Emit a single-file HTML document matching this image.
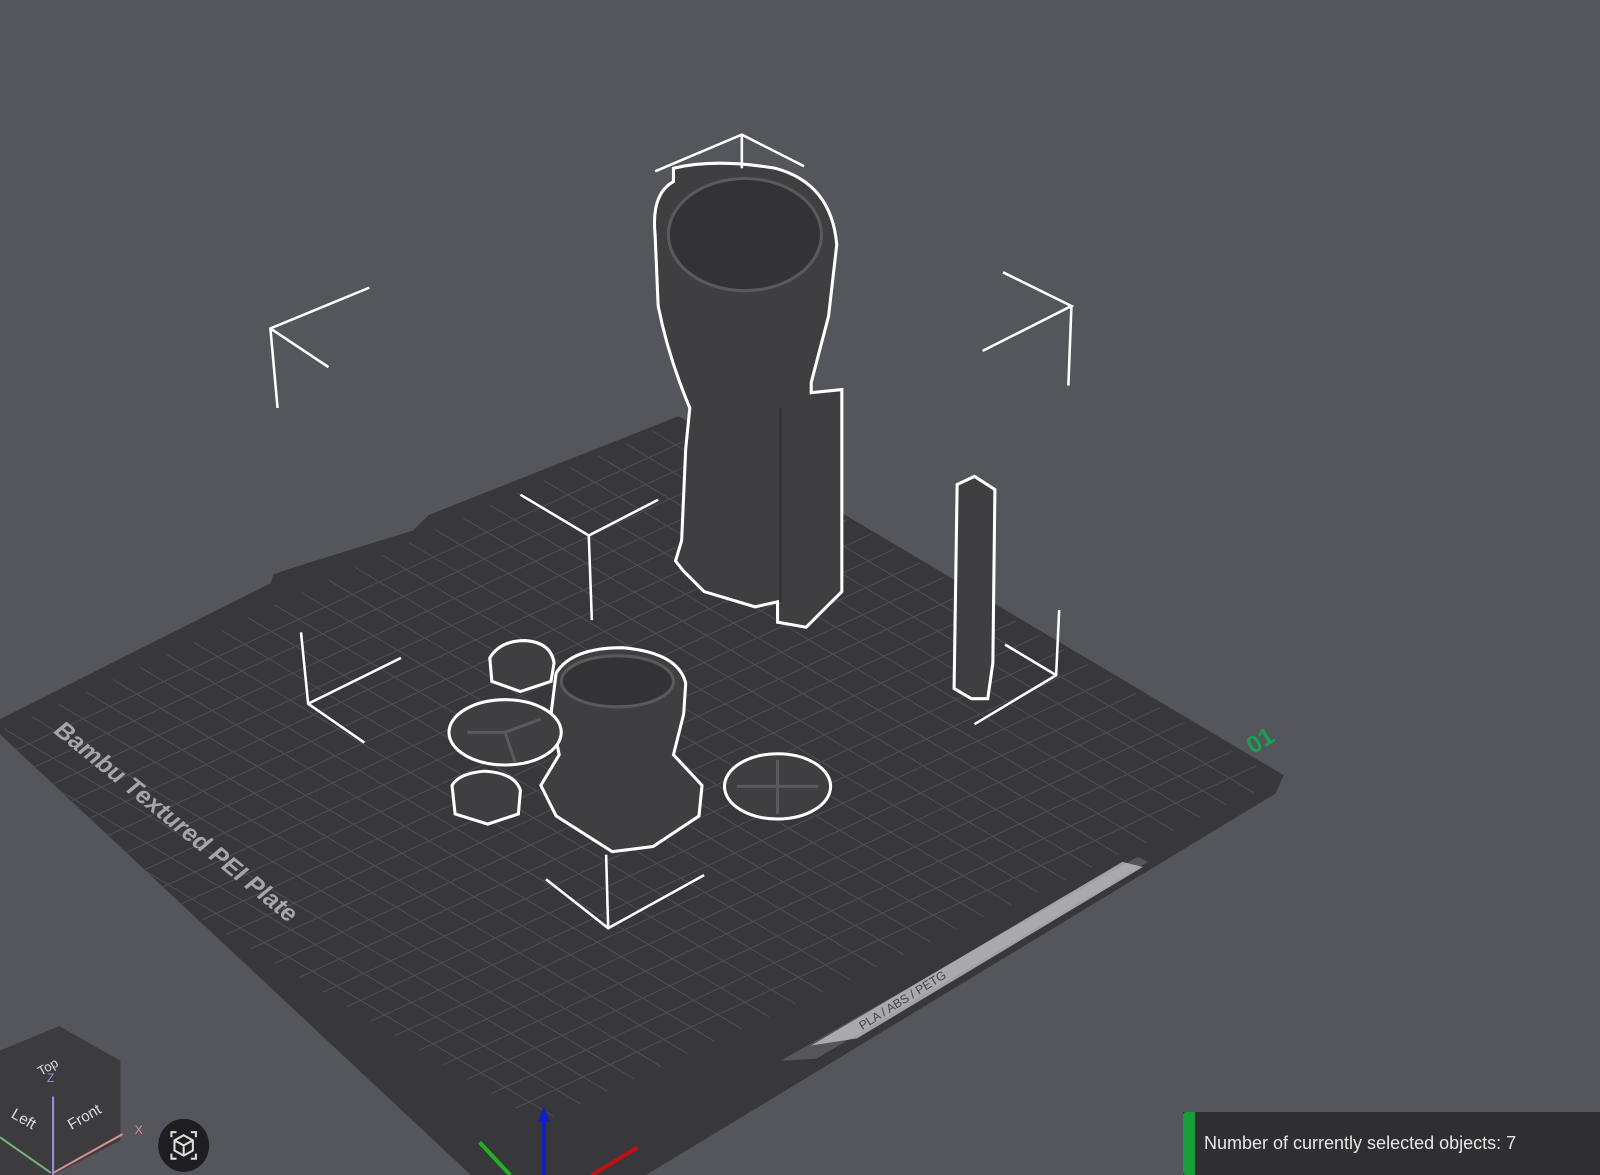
<!DOCTYPE html>
<html><head><style>
html,body{margin:0;padding:0;width:1600px;height:1175px;overflow:hidden;background:#55555c;font-family:"Liberation Sans",sans-serif}
svg{position:absolute;left:0;top:0}
.status{position:absolute;left:1183px;top:1112px;width:417px;height:63px;background:#2e2e33;color:#e8e8e8;font-size:18px;}
.status .bar{position:absolute;left:0;top:0;width:12px;height:63px;background:#1a9e3a;border-radius:3px 0 0 3px}
.status span{position:absolute;left:21px;top:21px}
</style></head><body>
<svg width="1600" height="1175" viewBox="0 0 1568 1152" preserveAspectRatio="none">
<defs><clipPath id="pc"><polygon points="665,408 1258,760 1250,778 620,1160 470,1160 0,720 0,705 265,572 268,563 292,555 405,520 420,505"/></clipPath></defs>
<polygon points="665,408 1258,760 1250,778 620,1160 470,1160 0,720 0,705 265,572 268,563 292,555 405,520 420,505" fill="#37373c"/>
<g clip-path="url(#pc)">
<g transform="matrix(5.9,3.55,-6.6,3.05,665,410)" stroke="#4e4e55" stroke-width="1">
<path vector-effect="non-scaling-stroke" d="M4 0V110M8 0V110M12 0V110M16 0V110M20 0V110M24 0V110M28 0V110M32 0V110M36 0V110M40 0V110M44 0V110M48 0V110M52 0V110M56 0V110M60 0V110M64 0V110M68 0V110M72 0V110M76 0V110M80 0V110M84 0V110M88 0V110M92 0V110M96 0V110"/>
<path vector-effect="non-scaling-stroke" d="M0 4H100M0 8H100M0 12H100M0 16H100M0 20H100M0 24H100M0 28H100M0 32H100M0 36H100M0 40H100M0 44H100M0 48H100M0 52H100M0 56H100M0 60H100M0 64H100M0 68H100M0 72H100M0 76H100M0 80H100M0 84H100M0 88H100M0 92H100M0 96H100M0 100H100M0 104H100M0 108H100"/>
</g></g>
<text x="0" y="0" transform="translate(52,718) rotate(39)" fill="#a5a5aa" font-size="24" font-style="italic" font-weight="bold">Bambu Textured PEI Plate</text>
<text x="0" y="0" transform="translate(1228,740) rotate(-32)" fill="#1aa050" font-size="24" font-weight="bold">01</text>
<polygon points="765,1040 800,1038 1125,845 1115,840" fill="#55555a"/>
<polygon points="795,1025 840,1018 1120,850 1100,845" fill="#cfcfcf" opacity=".7"/>
<text transform="translate(845,1010) rotate(-32)" fill="#444" font-size="12">PLA / ABS / PETG</text>
<g fill="#3f3f42" stroke="#fff" stroke-width="3">
<path d="M660,165 L660,178 Q638,190 642,230 L645,300 Q655,350 676,400 L672,440 L668,530 L662,550 L670,560 L690,580 L740,595 L762,590 L762,610 L790,615 L800,605 L825,580 L825,382 L795,385 L795,375 L812,310 L820,240 Q815,180 760,165 Q700,155 660,165 Z"/>
<path d="M938,475 L955,467 L975,480 L973,650 L968,685 L952,685 L935,675 Z"/>
<path d="M545,660 Q560,635 610,635 Q665,640 672,670 L670,700 L660,740 L688,770 L685,800 L640,830 L600,835 L545,800 L530,770 L548,740 L540,700 Z"/>
<path d="M480,645 Q490,628 515,628 Q540,630 543,650 L540,668 L510,678 L482,668 Z"/>
<path d="M443,770 Q450,758 475,756 Q505,758 510,775 L508,798 L478,808 L446,798 Z"/>
<ellipse cx="495" cy="718" rx="55" ry="32"/>
<ellipse cx="762" cy="771" rx="52" ry="32"/>
</g>
<g fill="none" stroke="#5a5a5e" stroke-width="3">
<ellipse cx="730" cy="230" rx="75" ry="55" fill="#333336"/>
<ellipse cx="605" cy="668" rx="55" ry="25" fill="#333336"/>
<path d="M458,718 L495,718 L530,705 M495,718 L505,748"/>
<path d="M722,771 L802,771 M762,745 L762,798"/>
<path d="M765,400 L765,590" stroke="#333"/>
</g>
<g fill="none" stroke="#fff" stroke-width="2.5">
<path d="M362,282 L265,322 L272,400 M265,322 L322,360"/>
<path d="M642,168 L727,132 L788,163 M727,132 L727,165"/>
<path d="M983,267 L1050,300 L963,344 M1050,300 L1047,378"/>
<path d="M510,485 L577,525 L580,608 M577,525 L645,490"/>
<path d="M295,620 L302,690 L357,728 M302,690 L393,645"/>
<path d="M1038,598 L1035,662 L955,710 M1035,662 L985,632"/>
<path d="M535,862 L596,910 L690,858 M596,910 L594,838"/>
</g>
<polygon points="0,1030 58,1006 118,1040 118,1118 52,1152 0,1152" fill="#3c3c3f"/>
<text transform="translate(40,1055) rotate(-30)" fill="#ddd" font-size="13">Top</text>
<text x="46" y="1061" fill="#9a8fdc" font-size="12">Z</text>
<text transform="translate(10,1095) rotate(30)" fill="#ddd" font-size="15">Left</text>
<text transform="translate(70,1108) rotate(-30)" fill="#ddd" font-size="15">Front</text>
<text x="132" y="1112" fill="#d88" font-size="12">X</text>
<path d="M52,1152 L52,1075" stroke="#9a8fdc" stroke-width="2"/>
<path d="M52,1150 L120,1112" stroke="#d89090" stroke-width="2"/>
<path d="M0,1115 L50,1150" stroke="#7ab07a" stroke-width="2"/>
<ellipse cx="180" cy="1123" rx="25" ry="26" fill="#1e1e20"/>
<path d="M168,1115 v-5 h5 M187,1110 h5 v5 M192,1131 v5 h-5 M173,1136 h-5 v-5 M180,1113 l9,5 v10 l-9,5 l-9,-5 v-10 z M171,1118 l9,5 l9,-5 M180,1123 v10" fill="none" stroke="#ddd" stroke-width="2"/>
<path d="M533,1152 L533,1092" stroke="#1020c0" stroke-width="4"/>
<polygon points="527,1100 533,1085 539,1100" fill="#1020c0"/>
<path d="M500,1152 L470,1120" stroke="#20b020" stroke-width="4"/>
<path d="M580,1152 L625,1125" stroke="#c01010" stroke-width="4"/>
</svg>
<div class="status"><div class="bar"></div><span>Number of currently selected objects: 7</span></div>
</body></html>
